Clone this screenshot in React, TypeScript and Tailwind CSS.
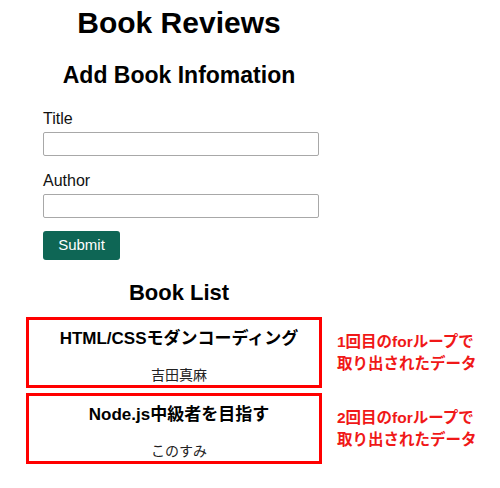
import { useState } from 'react';

type Book = { title: string; author: string };

const books: Book[] = [
  { title: 'HTML/CSSモダンコーディング', author: '吉田真麻' },
  { title: 'Node.js中級者を目指す', author: 'このすみ' },
];

const notes = ['1回目のforループで', '2回目のforループで'];

export default function App() {
  const [title, setTitle] = useState('');
  const [author, setAuthor] = useState('');

  return (
    <div className="min-h-[488px] w-[500px] bg-white text-black font-['Liberation_Sans','Noto_Sans_CJK_JP',sans-serif]">
      <div className="w-[358px] pt-[5px]">
        <h1 className="text-center text-[30px] font-bold leading-[36px]">Book Reviews</h1>
        <h2 className="mt-[21px] text-center text-[23px] font-bold leading-[26px]">Add Book Infomation</h2>

        <form className="mt-[21px] pl-[43px]" onSubmit={(e) => e.preventDefault()}>
          <label className="block text-[16px] leading-[20px] text-[#111]">Title</label>
          <input
            className="mt-[3px] block h-[24px] w-[276px] rounded-[2px] border border-[#a8a8a8] px-1 text-sm"
            value={title}
            onChange={(e) => setTitle(e.target.value)}
          />
          <label className="mt-[15px] block text-[16px] leading-[20px] text-[#111]">Author</label>
          <input
            className="mt-[3px] block h-[24px] w-[276px] rounded-[2px] border border-[#a8a8a8] px-1 text-sm"
            value={author}
            onChange={(e) => setAuthor(e.target.value)}
          />
          <button
            type="submit"
            className="mt-[13px] h-[29px] w-[77px] rounded-[3px] bg-[#0e6655] text-[15px] text-white"
          >
            Submit
          </button>
        </form>

        <h2 className="mt-[20px] text-center text-[22px] font-bold leading-[26px]">Book List</h2>
      </div>

      <div className="mt-[11px] flex flex-col gap-[5px]">
        {books.map((b, i) => (
          <div key={b.title} className="flex items-center">
            <div className="ml-[26px] h-[71px] w-[296px] border-[3px] border-[#ff0000] pl-[10px] pt-[7px] text-center">
              <div className="text-[17px] font-bold leading-[24px]">{b.title}</div>
              <div className="mt-[14px] text-[14px] leading-[20px] text-[#222]">{b.author}</div>
            </div>
            <div className="ml-[15px] text-[15.5px] font-semibold leading-[22px] text-[#f01818]">
              <div>{notes[i]}</div>
              <div>取り出されたデータ</div>
            </div>
          </div>
        ))}
      </div>
    </div>
  );
}
